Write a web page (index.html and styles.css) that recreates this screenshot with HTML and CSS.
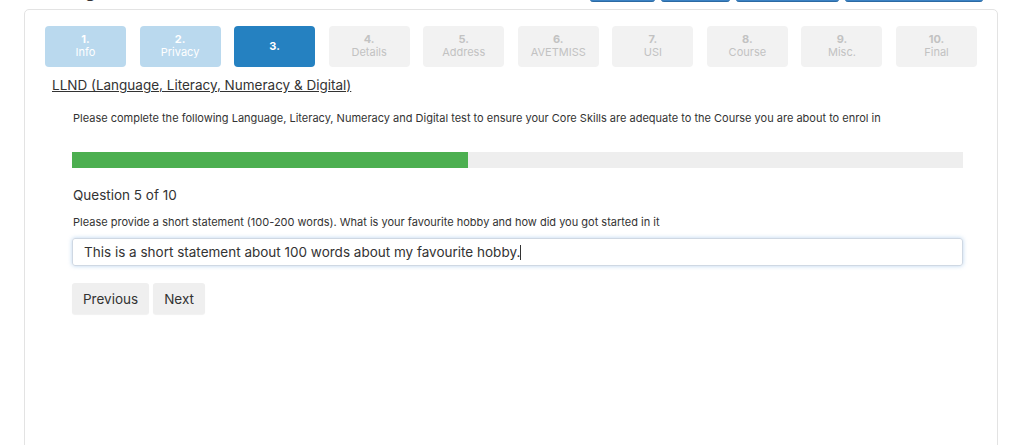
FILE: index.html
```html
<!DOCTYPE html>
<html>
<head>
<meta charset="utf-8">
<link rel="stylesheet" href="styles.css">
</head>
<body>
<div class="page">
  <div class="topbar">
    <h2 class="page-title">Enrolling</h2>
    <div class="top-actions">
      <span class="top-btn w1"></span>
      <span class="top-btn w2"></span>
      <span class="top-btn w3"></span>
      <span class="top-btn w4"></span>
    </div>
  </div>
  <div class="card">
    <div class="steps">
      <div class="step done"><b>1.</b><span>Info</span></div>
      <div class="step done"><b>2.</b><span>Privacy</span></div>
      <div class="step active"><b>3.</b></div>
      <div class="step"><b>4.</b><span>Details</span></div>
      <div class="step"><b>5.</b><span>Address</span></div>
      <div class="step"><b>6.</b><span>AVETMISS</span></div>
      <div class="step"><b>7.</b><span>USI</span></div>
      <div class="step"><b>8.</b><span>Course</span></div>
      <div class="step"><b>9.</b><span>Misc.</span></div>
      <div class="step"><b>10.</b><span>Final</span></div>
    </div>
    <a class="section-title">LLND (Language, Literacy, Numeracy &amp; Digital)</a>
    <div class="content">
      <p class="intro">Please complete the following Language, Literacy, Numeracy and Digital test to ensure your Core Skills are adequate to the Course you are about to enrol in</p>
      <div class="progress"><div class="progress-fill" style="width:44.4%"></div></div>
      <div class="question">Question 5 of 10</div>
      <p class="prompt">Please provide a short statement (100-200 words). What is your favourite hobby and how did you got started in it</p>
      <div class="answer">This is a short statement about 100 words about my favourite hobby.<span class="caret"></span></div>
      <div class="nav">
        <button class="btn">Previous</button>
        <button class="btn">Next</button>
      </div>
    </div>
  </div>
</div>
</body>
</html>
```
FILE: styles.css
```css
html, body {
  margin: 0;
  padding: 0;
  background: #ffffff;
  font-family: Inter, "Noto Sans", sans-serif;
  color: #333;
  overflow: hidden;
}
.page {
  padding: 0 26px 0 24px;
}
.topbar {
  display: flex;
  justify-content: space-between;
  align-items: flex-end;
  height: 40px;
  margin-top: -31px;
}
.page-title {
  margin: 0 0 0 -4px;
  font-size: 18px;
  line-height: 36px;
  font-weight: 600;
  color: #333;
}
.top-actions {
  display: flex;
  gap: 6px;
  margin-right: 15px;
  align-items: flex-start;
  height: 40px;
}
.top-btn {
  display: block;
  height: 32px;
  background: #3b82c4;
  border-bottom: 1px solid #2c6aa3;
  border-radius: 3px;
}
.w1 { width: 65px; }
.w2 { width: 69px; }
.w3 { width: 103px; }
.w4 { width: 138px; }
.card {
  border: 1px solid #e3e3e3;
  border-radius: 5px;
  height: 460px;
  padding: 16px 20px 0 20px;
}
.steps {
  display: grid;
  grid-template-columns: repeat(10, 1fr);
  column-gap: 13.5px;
  width: 932px;
}
.step {
  height: 41px;
  border-radius: 4px;
  background: #f2f2f2;
  color: #c2c2c2;
  display: flex;
  flex-direction: column;
  align-items: center;
  justify-content: center;
  font-size: 11px;
  line-height: 13px;
  padding-bottom: 1px;
  box-sizing: border-box;
}
.step b { font-weight: 700; }
.step.done { background: #bad9ee; color: #fff; }
.step.active { background: #2581c1; color: #fff; }
.section-title {
  display: inline-block;
  margin: 10px 0 0 7px;
  font-size: 13.5px;
  line-height: 16px;
  color: #333;
  text-decoration: underline;
}
.content {
  padding: 0 14px 0 27px;
}
.intro {
  margin: 17px 0 0 1px;
  font-size: 11px;
  line-height: 14px;
  color: #333;
}
.progress {
  margin-top: 27px;
  height: 16px;
  background: #eeeeee;
}
.progress-fill {
  height: 100%;
  background: #4caf50;
}
.question {
  margin: 19px 0 0 1px;
  font-size: 13.5px;
  line-height: 16px;
  color: #333;
}
.prompt {
  margin: 12px 0 0 1px;
  font-size: 11px;
  line-height: 14px;
  color: #333;
}
.answer {
  margin-top: 9px;
  height: 26px;
  border: 1px solid #cfd8e3;
  border-radius: 3px;
  box-shadow: 0 0 4px rgba(102, 160, 220, 0.45);
  padding: 0 11px;
  font-size: 13.5px;
  line-height: 26px;
  color: #333;
  display: flex;
  align-items: center;
}
.caret {
  display: inline-block;
  width: 1px;
  height: 15px;
  background: #333;
}
.nav {
  display: flex;
  gap: 4px;
  margin-top: 17px;
}
.btn {
  font-family: Inter, "Noto Sans", sans-serif;
  font-size: 13.5px;
  color: #333;
  background: #efefef;
  border: none;
  border-radius: 3px;
  height: 31px;
  padding: 0 11px;
  box-shadow: 0 1px 1px rgba(0,0,0,0.06);
}
```
